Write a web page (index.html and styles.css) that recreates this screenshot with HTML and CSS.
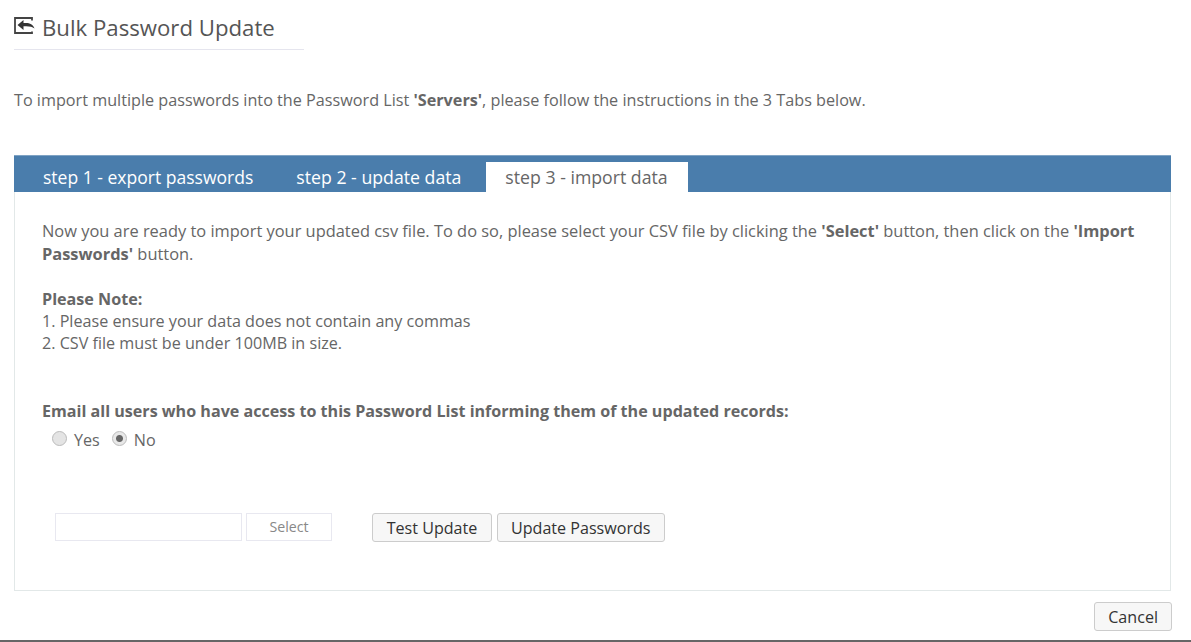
FILE: index.html
```html
<!DOCTYPE html>
<html lang="en">
<head>
    <meta charset="UTF-8">
    <title>Bulk Password Update</title>
    <link rel="stylesheet" href="styles.css">
</head>
<body>
    <div class="page">
        <div class="page-title">
            <svg class="title-icon" viewBox="0 0 21 17" width="21" height="17">
                <path d="M18 3.500V1H1v15h17v-1.500" fill="none" stroke="#444" stroke-width="1.800"/>
                <path d="M3.500 8 9.500 3v3h2.500c4 0 7 1.500 8.500 5.500-2-1.500-4.500-2.200-8.500-2.200H9.500V13z" fill="#333"/>
            </svg>
            <h1>Bulk Password Update</h1>
        </div>
        <p class="intro">To import multiple passwords into the Password List <b>'Servers'</b>, please follow the instructions in the 3 Tabs below.</p>

        <div class="tabs">
            <a class="tab tab-1">step 1 - export passwords</a>
            <a class="tab tab-2">step 2 - update data</a>
            <a class="tab active">step 3 - import data</a>
        </div>
        <div class="panel">
            <p class="lead">Now you are ready to import your updated csv file. To do so, please select your CSV file by clicking the <b>'Select'</b> button, then click on the <b>'Import Passwords'</b> button.</p>
            <p class="note"><b>Please Note:</b><br>1. Please ensure your data does not contain any commas<br>2. CSV file must be under 100MB in size.</p>
            <p class="email-label">Email all users who have access to this Password List informing them of the updated records:</p>
            <div class="radios">
                <label><input type="radio" name="email"> Yes</label>
                <label><input type="radio" name="email" checked> No</label>
            </div>
            <div class="upload-row">
                <div class="file-box"></div>
                <div class="select-btn">Select</div>
                <button class="btn first-btn">Test Update</button>
                <button class="btn">Update Passwords</button>
            </div>
        </div>
        <div class="footer-row">
            <button class="btn cancel-btn">Cancel</button>
        </div>
    </div>
</body>
</html>
```

FILE: styles.css
```css
html, body { margin: 0; padding: 0; }
body { font-family: "Open Sans", sans-serif; font-size: 16.150px; color: #666; background: #fff; height: 642px; overflow: hidden; }
b { font-weight: 700; }
p { margin: 0; }

.page { height: 642px; box-sizing: border-box; padding: 0 20px 0 14px; border-bottom: 2px solid #666; }

.page-title { display: flex; align-items: center; width: 290px; height: 50px; border-bottom: 1px solid #e5e5ee; padding-top: 5px; box-sizing: border-box; }
.title-icon { margin-right: 7px; margin-top: -4px; }
h1 { margin: 0; font-size: 22.200px; font-weight: 400; color: #555; }

.intro { margin-top: 40px; height: 20px; line-height: 20px; font-size: 16.200px; }

.tabs { display: flex; align-items: flex-end; margin-top: 45px; height: 37px; padding-left: 14px; background: #4a7dac; border-top: 1px solid #7fa3c4; box-sizing: border-box; }
.tab { font-size: 17.700px; line-height: 30px; color: #fff; padding: 0 15px; white-space: nowrap; }
.tab-1 { font-size: 17.550px; padding-right: 29px; }
.tab-2 { padding: 0 25px 0 14px; }
.tab.active { background: #fff; color: #666; padding: 0 20px 0 19px; }

.panel { height: 399px; border: 1px solid #e2e8e8; border-top: 0; padding: 27px 27px 0; box-sizing: border-box; }
.lead { line-height: 23px; font-size: 16.420px; }
.note { margin-top: 23px; line-height: 22px; }
.email-label { margin-top: 46px; font-weight: 700; line-height: 22px; font-size: 16.100px; }

.radios { display: flex; margin: 8px 0 0 10px; gap: 12px; line-height: 20px; }
.radios label { display: flex; align-items: center; gap: 7px; }
.radios input { appearance: none; margin: -4px 0 0; width: 15px; height: 15px; box-sizing: border-box; border: 1px solid #bbb; border-radius: 50%; background: #e4e4e4; }
.radios input:checked { background: radial-gradient(circle, #666 0 3px, #e8e8e8 4px); }

.upload-row { display: flex; align-items: flex-start; margin: 63px 0 0 13px; }
.file-box { width: 185px; height: 26px; border: 1px solid #e8e8f0; }
.select-btn { width: 84px; height: 26px; line-height: 26px; margin-left: 4px; border: 1px solid #e8e8f0; font-size: 14.200px; text-align: center; color: #888; }

.btn { font-family: "Open Sans", sans-serif; font-size: 16.100px; color: #333; height: 29px; padding: 0 13px; background: #f7f7f7; border: 1px solid #ccc; border-radius: 3px; white-space: nowrap; }
.first-btn { margin-left: 40px; margin-right: 5px; width: 120px; }

.footer-row { display: flex; justify-content: flex-end; margin: 11px -1px 0 0; }
```
